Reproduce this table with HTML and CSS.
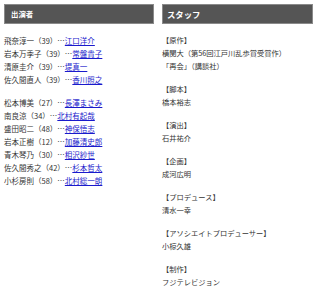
FILE: index.html
```html
<!DOCTYPE html>
<html lang="ja">
<head>
<meta charset="utf-8">
<link rel="stylesheet" href="styles.css">
</head>
<body>
<div class="wrap">
  <section class="col col-cast">
    <h2 class="head">出演者</h2>
    <p class="block">
      飛奈淳一（39）…<a href="#">江口洋介</a><br>
      岩本万季子（39）…<a href="#">常盤貴子</a><br>
      清原圭介（39）…<a href="#">堤真一</a><br>
      佐久間直人（39）…<a href="#">香川照之</a>
    </p>
    <p class="block">
      松本博美（27）…<a href="#">長澤まさみ</a><br>
      南良涼（34）…<a href="#">北村有起哉</a><br>
      盛田昭二（48）…<a href="#">神保悟志</a><br>
      岩本正樹（12）…<a href="#">加藤清史郎</a><br>
      青木琴乃（30）…<a href="#">相沢紗世</a><br>
      佐久間秀之（42）…<a href="#">杉本哲太</a><br>
      小杉房則（58）…<a href="#">北村総一朗</a>
    </p>
  </section>
  <section class="col col-staff">
    <h2 class="head">スタッフ</h2>
    <p class="block">【原作】<br>横関大（第56回江戸川乱歩賞受賞作）<br>「再会」（講談社）</p>
    <p class="block">【脚本】<br>橋本裕志</p>
    <p class="block">【演出】<br>石井祐介</p>
    <p class="block">【企画】<br>成河広明</p>
    <p class="block">【プロデュース】<br>清水一幸</p>
    <p class="block">【アソシエイトプロデューサー】<br>小椋久雄</p>
    <p class="block">【制作】<br>フジテレビジョン</p>
  </section>
</div>
</body>
</html>
```
FILE: styles.css
```css
html, body {
  margin: 0;
  padding: 0;
  background: #fff;
}
.wrap {
  display: flex;
  gap: 8px;
  padding: 4px;
  font-family: "Noto Sans CJK JP", "Noto Sans", sans-serif;
  line-height: 13px;
  color: #333;
}
.col {
  width: 150px;
  flex: none;
}
.col-cast {
  font-size: 7.5px;
}
.col-staff {
  width: 151px;
  font-size: 7.25px;
}
.head {
  margin: 0 0 10px;
  height: 20px;
  box-sizing: border-box;
  background: #555;
  border: 1px solid #8a8a8a;
  color: #fff;
  font-size: 8px;
  font-weight: bold;
  line-height: 18px;
  padding-left: 6px;
}
.col-staff .head {
  padding-left: 4px;
  font-size: 8.4px;
}
.col-cast .head {
  font-size: 7.4px;
}
.block {
  margin: 0 0 10px;
}
a {
  color: #1a1acc;
  text-decoration: underline;
}
```
